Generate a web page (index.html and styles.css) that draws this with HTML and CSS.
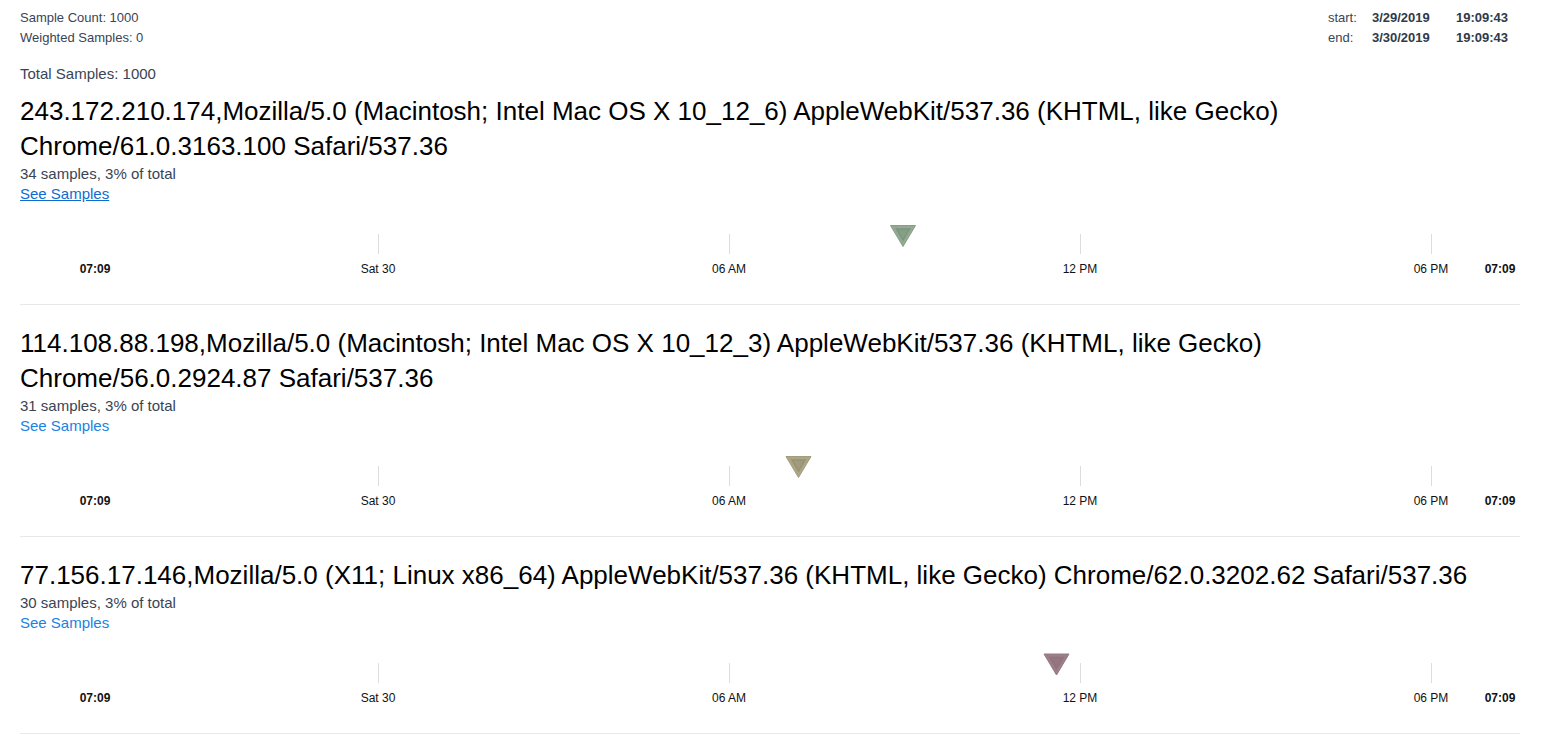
FILE: index.html
```html
<!DOCTYPE html>
<html>
<head>
<meta charset="utf-8">
<link rel="stylesheet" href="styles.css">
</head>
<body>
<div class="page">
  <header class="top">
    <div class="counts">
      <div class="meta-line">Sample Count: 1000</div>
      <div class="meta-line">Weighted Samples: 0</div>
    </div>
    <div class="range">
      <span class="r-label">start:</span><span class="r-val">3/29/2019</span><span class="r-val">19:09:43</span>
      <span class="r-label">end:</span><span class="r-val">3/30/2019</span><span class="r-val">19:09:43</span>
    </div>
  </header>
  <div class="total">Total Samples: 1000</div>

  <section class="group">
    <h2 class="title">243.172.210.174,Mozilla/5.0 (Macintosh; Intel Mac OS X 10_12_6) AppleWebKit/537.36 (KHTML, like Gecko) Chrome/61.0.3163.100 Safari/537.36</h2>
    <div class="sub">34 samples, 3% of total</div>
    <a class="link hover" href="#">See Samples</a>
    <svg class="chart" viewBox="0 0 1500 100" width="1500" height="100">
      <g class="ticks">
        <line x1="358.5" y1="30" x2="358.5" y2="50"/>
        <line x1="709.5" y1="30" x2="709.5" y2="50"/>
        <line x1="1060.5" y1="30" x2="1060.5" y2="50"/>
        <line x1="1411.5" y1="30" x2="1411.5" y2="50"/>
      </g>
      <g class="labels">
        <text x="75" y="69" class="bold">07:09</text>
        <text x="358" y="69">Sat 30</text>
        <text x="709" y="69">06 AM</text>
        <text x="1060" y="69">12 PM</text>
        <text x="1411" y="69">06 PM</text>
        <text x="1480" y="69" class="bold">07:09</text>
      </g>
      <polygon class="tri-g" points="870.5,21.5 895.5,21.5 883,42.5"/>
      <polygon class="tri-g-in" points="876.5,25 889.5,25 883,36"/>
    </svg>
  </section>

  <section class="group">
    <h2 class="title">114.108.88.198,Mozilla/5.0 (Macintosh; Intel Mac OS X 10_12_3) AppleWebKit/537.36 (KHTML, like Gecko) Chrome/56.0.2924.87 Safari/537.36</h2>
    <div class="sub">31 samples, 3% of total</div>
    <a class="link" href="#">See Samples</a>
    <svg class="chart" viewBox="0 0 1500 100" width="1500" height="100">
      <g class="ticks">
        <line x1="358.5" y1="30" x2="358.5" y2="50"/>
        <line x1="709.5" y1="30" x2="709.5" y2="50"/>
        <line x1="1060.5" y1="30" x2="1060.5" y2="50"/>
        <line x1="1411.5" y1="30" x2="1411.5" y2="50"/>
      </g>
      <g class="labels">
        <text x="75" y="69" class="bold">07:09</text>
        <text x="358" y="69">Sat 30</text>
        <text x="709" y="69">06 AM</text>
        <text x="1060" y="69">12 PM</text>
        <text x="1411" y="69">06 PM</text>
        <text x="1480" y="69" class="bold">07:09</text>
      </g>
      <polygon class="tri-o" points="766,20.5 791,20.5 778.5,41.5"/>
      <polygon class="tri-o-in" points="772,24 785,24 778.5,35"/>
    </svg>
  </section>

  <section class="group">
    <h2 class="title">77.156.17.146,Mozilla/5.0 (X11; Linux x86_64) AppleWebKit/537.36 (KHTML, like Gecko) Chrome/62.0.3202.62 Safari/537.36</h2>
    <div class="sub">30 samples, 3% of total</div>
    <a class="link" href="#">See Samples</a>
    <svg class="chart" viewBox="0 0 1500 100" width="1500" height="100">
      <g class="ticks">
        <line x1="358.5" y1="30" x2="358.5" y2="50"/>
        <line x1="709.5" y1="30" x2="709.5" y2="50"/>
        <line x1="1060.5" y1="30" x2="1060.5" y2="50"/>
        <line x1="1411.5" y1="30" x2="1411.5" y2="50"/>
      </g>
      <g class="labels">
        <text x="75" y="69" class="bold">07:09</text>
        <text x="358" y="69">Sat 30</text>
        <text x="709" y="69">06 AM</text>
        <text x="1060" y="69">12 PM</text>
        <text x="1411" y="69">06 PM</text>
        <text x="1480" y="69" class="bold">07:09</text>
      </g>
      <polygon class="tri-m" points="1024,21 1049,21 1036.5,42"/>
      <polygon class="tri-m-in" points="1030,24.5 1043,24.5 1036.5,35.5"/>
    </svg>
  </section>
</div>
</body>
</html>
```

FILE: styles.css
```css
html, body {
  margin: 0;
  padding: 0;
  background: #ffffff;
}

body {
  font-family: "Liberation Sans", Arial, sans-serif;
  color: #374151;
}

.page {
  width: 1500px;
  padding: 8px 24px 0 20px;
}

.top {
  display: flex;
  justify-content: space-between;
  align-items: flex-start;
}

.meta-line {
  font-size: 13px;
  line-height: 20px;
  color: #3a4454;
}

.range {
  display: grid;
  grid-template-columns: 44px 84px auto;
  margin-right: 12px;
  font-size: 13px;
  line-height: 20px;
  color: #3a4454;
}

.r-val {
  font-weight: bold;
  color: #2f3a4a;
}

.total {
  margin-top: 16px;
  font-size: 15px;
  line-height: 20px;
  color: #3a4454;
}

.group {
  border-bottom: 1px solid #e8e8e8;
}

.group + .group {
  padding-top: 21px;
}

.group:first-of-type {
  margin-top: 10px;
}

.title {
  margin: 0;
  font-size: 26px;
  line-height: 35px;
  font-weight: normal;
  color: #000000;
}

.sub {
  font-size: 15px;
  line-height: 20px;
  color: #3a4454;
}

.link {
  display: block;
  width: max-content;
  font-size: 15px;
  line-height: 20px;
  color: #1a82e2;
  text-decoration: none;
}

.link.hover {
  color: #0f6ccf;
  text-decoration: underline;
}

.chart {
  display: block;
}

.ticks line {
  stroke: #dddddd;
  stroke-width: 1;
}

.labels text {
  font-family: "Liberation Sans", Arial, sans-serif;
  font-size: 12px;
  fill: #111111;
  text-anchor: middle;
}

.labels text.bold {
  font-weight: bold;
}

.tri-g { fill: #93a990; stroke: #87a085; stroke-width: 1; }
.tri-g-in { fill: #859e86; stroke: #7c9780; stroke-width: 1.5; }

.tri-o { fill: #ada685; stroke: #a39d7e; stroke-width: 1; }
.tri-o-in { fill: #a19b7c; stroke: #979277; stroke-width: 1.5; }

.tri-m { fill: #9d7e89; stroke: #967883; stroke-width: 1; }
.tri-m-in { fill: #94767f; stroke: #8f737d; stroke-width: 1.5; }
```
